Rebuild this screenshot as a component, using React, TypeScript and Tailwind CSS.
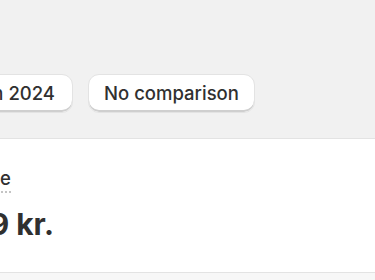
export default function App() {
  return (
    <div
      className="h-[280px] w-[375px] overflow-hidden bg-[#f1f1f1] text-[#303030]"
      style={{ fontFamily: "Inter, 'Noto Sans', sans-serif" }}
    >
      <div className="h-[74px]" />
      <div className="flex items-center gap-[15px]">
        <div className="flex w-[73px] justify-end">
          <button className="h-[39px] shrink-0 whitespace-nowrap rounded-[11px] border border-[#e3e3e3] bg-white px-[17px] text-[18.5px] font-medium shadow-[inset_0_-2px_0_#cfcfcf]">
            Jan 2024
          </button>
        </div>
        <button className="h-[39px] w-[167px] shrink-0 whitespace-nowrap rounded-[11px] border border-[#e3e3e3] bg-white text-[18.5px] font-medium shadow-[inset_0_-2px_0_#cfcfcf]">
          No comparison
        </button>
      </div>
      <div className="mt-[25px] h-[135px] border-t border-b border-[#e3e3e3] bg-white">
        <div className="pt-[29px]">
          <div className="flex w-[11px] justify-end">
            <span className="shrink-0 whitespace-nowrap border-b-2 border-dotted border-[#c4c4c4] pb-[3px] text-[18.5px] font-medium leading-[20px]">
              Average order value
            </span>
          </div>
          <div className="mt-[16px] flex w-[54px] justify-end">
            <span className="shrink-0 whitespace-nowrap text-[30px] font-bold leading-[30px]">
              549 kr.
            </span>
          </div>
        </div>
      </div>
      <div className="h-[10px] bg-[#f7f7f7]" />
    </div>
  );
}
